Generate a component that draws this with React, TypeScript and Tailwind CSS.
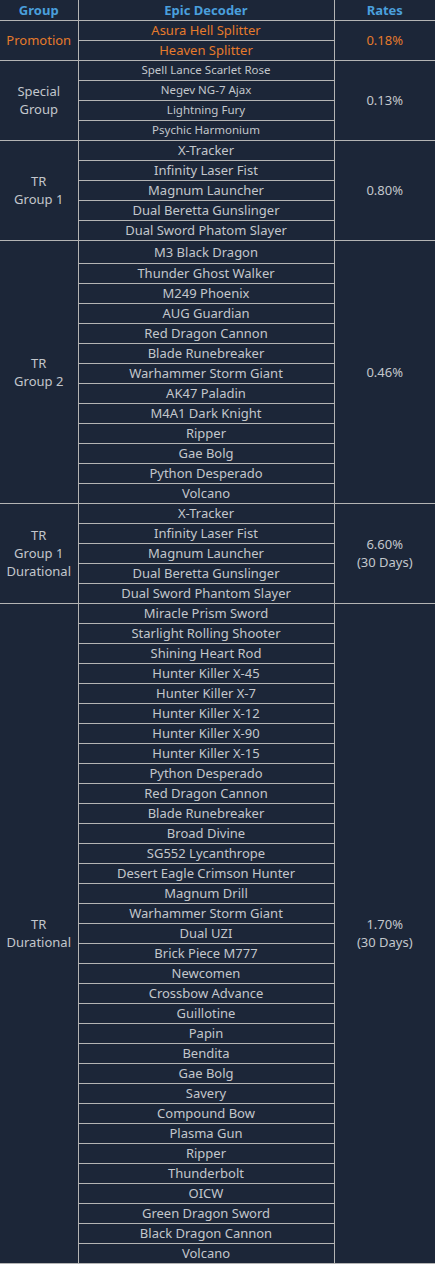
import React from 'react';

type Group = {
  name: string[];
  rate: string[];
  items: string[];
  tone?: 'orange';
  small?: boolean;
  firstTall?: boolean;
};

const groups: Group[] = [
  {
    name: ['Promotion'],
    rate: ['0.18%'],
    items: ['Asura Hell Splitter', 'Heaven Splitter'],
    tone: 'orange',
  },
  {
    name: ['Special', 'Group'],
    rate: ['0.13%'],
    items: ['Spell Lance Scarlet Rose', 'Negev NG-7 Ajax', 'Lightning Fury', 'Psychic Harmonium'],
    small: true,
  },
  {
    name: ['TR', 'Group 1'],
    rate: ['0.80%'],
    items: ['X-Tracker', 'Infinity Laser Fist', 'Magnum Launcher', 'Dual Beretta Gunslinger', 'Dual Sword Phatom Slayer'],
  },
  {
    name: ['TR', 'Group 2'],
    rate: ['0.46%'],
    firstTall: true,
    items: [
      'M3 Black Dragon',
      'Thunder Ghost Walker',
      'M249 Phoenix',
      'AUG Guardian',
      'Red Dragon Cannon',
      'Blade Runebreaker',
      'Warhammer Storm Giant',
      'AK47 Paladin',
      'M4A1 Dark Knight',
      'Ripper',
      'Gae Bolg',
      'Python Desperado',
      'Volcano',
    ],
  },
  {
    name: ['TR', 'Group 1', 'Durational'],
    rate: ['6.60%', '(30 Days)'],
    items: ['X-Tracker', 'Infinity Laser Fist', 'Magnum Launcher', 'Dual Beretta Gunslinger', 'Dual Sword Phantom Slayer'],
  },
  {
    name: ['TR', 'Durational'],
    rate: ['1.70%', '(30 Days)'],
    items: [
      'Miracle Prism Sword',
      'Starlight Rolling Shooter',
      'Shining Heart Rod',
      'Hunter Killer X-45',
      'Hunter Killer X-7',
      'Hunter Killer X-12',
      'Hunter Killer X-90',
      'Hunter Killer X-15',
      'Python Desperado',
      'Red Dragon Cannon',
      'Blade Runebreaker',
      'Broad Divine',
      'SG552 Lycanthrope',
      'Desert Eagle Crimson Hunter',
      'Magnum Drill',
      'Warhammer Storm Giant',
      'Dual UZI',
      'Brick Piece M777',
      'Newcomen',
      'Crossbow Advance',
      'Guillotine',
      'Papin',
      'Bendita',
      'Gae Bolg',
      'Savery',
      'Compound Bow',
      'Plasma Gun',
      'Ripper',
      'Thunderbolt',
      'OICW',
      'Green Dragon Sword',
      'Black Dragon Cannon',
      'Volcano',
    ],
  },
];

const cell = 'border border-[#b4b4b4] p-0 text-center align-middle';

const App: React.FC = () => {
  return (
    <div
      className="w-[435px] bg-[#1c2638] text-[13px] leading-[18px] text-[#c3c7cc]"
      style={{ fontFamily: '"Noto Sans", "Open Sans", sans-serif' }}
    >
      <table className="w-full table-fixed border-collapse border-hidden">
        <colgroup>
          <col className="w-[78px]" />
          <col className="w-[256px]" />
          <col />
        </colgroup>
        <thead>
          <tr className="h-[20px] font-bold text-[#4a9fdc]">
            <th className={cell}>Group</th>
            <th className={cell}>Epic Decoder</th>
            <th className={cell}>Rates</th>
          </tr>
        </thead>
        <tbody>
          {groups.map((g) =>
            g.items.map((item, i) => {
              const orange = g.tone === 'orange' ? 'text-[#e57a2c]' : '';
              return (
                <tr key={g.name.join('-') + i} className={g.firstTall && i === 0 ? 'h-[23px]' : 'h-[20px]'}>
                  {i === 0 && (
                    <td rowSpan={g.items.length} className={`${cell} ${orange}`}>
                      {g.name.map((n) => (
                        <div key={n}>{n}</div>
                      ))}
                    </td>
                  )}
                  <td className={`${cell} ${orange} ${g.small ? 'text-[11.5px]' : ''}`}>{item}</td>
                  {i === 0 && (
                    <td rowSpan={g.items.length} className={`${cell} ${orange}`}>
                      {g.rate.map((r) => (
                        <div key={r}>{r}</div>
                      ))}
                    </td>
                  )}
                </tr>
              );
            })
          )}
        </tbody>
      </table>
      <div className="h-px bg-[#b4b4b4]" />
    </div>
  );
};

export default App;
